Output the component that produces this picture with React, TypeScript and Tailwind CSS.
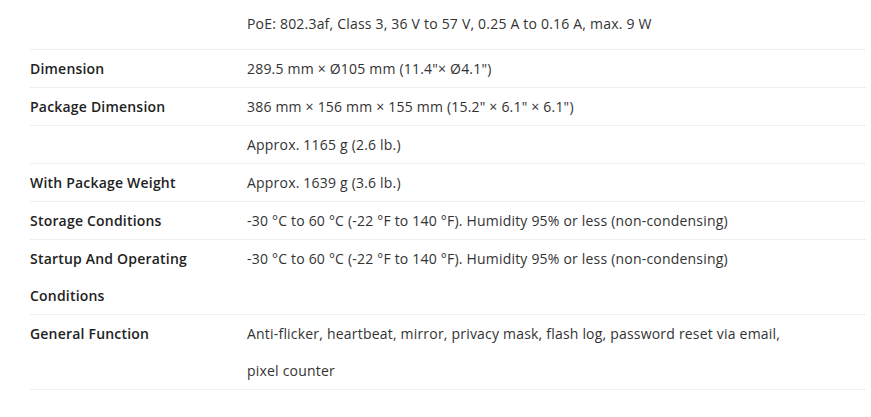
import React from "react";

type Row = { label?: string; value: string };

const rows: Row[] = [
  { label: "Dimension", value: "289.5 mm × Ø105 mm (11.4\"× Ø4.1\")" },
  { label: "Package Dimension", value: "386 mm × 156 mm × 155 mm (15.2\" × 6.1\" × 6.1\")" },
  { value: "Approx. 1165 g (2.6 lb.)" },
  { label: "With Package Weight", value: "Approx. 1639 g (3.6 lb.)" },
  { label: "Storage Conditions", value: "-30 °C to 60 °C (-22 °F to 140 °F). Humidity 95% or less (non-condensing)" },
  { label: "Startup And Operating Conditions", value: "-30 °C to 60 °C (-22 °F to 140 °F). Humidity 95% or less (non-condensing)" },
  { label: "General Function", value: "Anti-flicker, heartbeat, mirror, privacy mask, flash log, password reset via email, pixel counter" },
];

export default function App() {
  return (
    <div
      className="w-[871px] h-[417px] bg-white overflow-hidden"
      style={{ fontFamily: '"Open Sans", "Noto Sans", sans-serif' }}
    >
      <div className="ml-[30px] w-[836px] text-[14px] leading-[37px] tracking-[0.2px]">
        <div className="flex border-b border-[#eeeeee] pt-[5px] pb-[7px]">
          <div className="w-[217px] shrink-0" />
          <div className="w-[560px] text-[#333333]">
            PoE: 802.3af, Class 3, 36 V to 57 V, 0.25 A to 0.16 A, max. 9 W
          </div>
        </div>
        {rows.map((r, i) => (
          <div key={i} className="flex border-b border-[#eeeeee]">
            <div className="w-[217px] shrink-0 font-semibold text-[#222222] pr-[20px]">
              {r.label ?? ""}
            </div>
            <div className="w-[560px] text-[#333333]">{r.value}</div>
          </div>
        ))}
      </div>
    </div>
  );
}
